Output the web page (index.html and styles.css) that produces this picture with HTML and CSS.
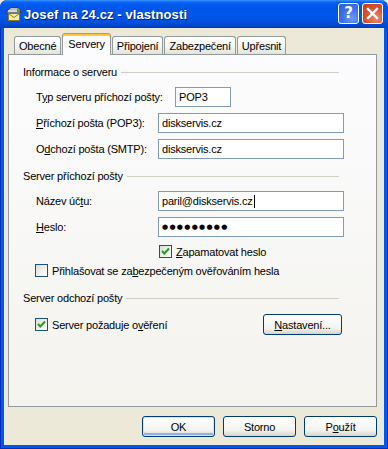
FILE: index.html
```html
<!DOCTYPE html>
<html lang="cs">
<head>
<meta charset="utf-8">
<title>Josef na 24.cz - vlastnosti</title>
<link rel="stylesheet" href="styles.css">
</head>
<body>
<div class="window">
  <div class="titlebar">
    <svg class="app-icon" width="17" height="17" viewBox="0 0 17 17">
      <path d="M2 6 L6 2.5 L13 2.5 L15.5 5 L15.5 8 L2 8 Z" fill="#B8BCC0" stroke="#3A3F44" stroke-width="1"/>
      <path d="M3 6 L14.5 6" stroke="#ECEFF2" stroke-width="1"/>
      <path d="M12 3 L15 5.5 L15 7.5 L12 7.5 Z" fill="#4FA04A"/>
      <rect x="3.5" y="8.5" width="11" height="7" fill="#F6EDA6" stroke="#8C7A2A" stroke-width="1"/>
      <path d="M3.5 8.5 L9 12.5 L14.5 8.5" fill="none" stroke="#8C7A2A" stroke-width="1"/>
    </svg>
    <span class="title">Josef na 24.cz - vlastnosti</span>
    <div class="caption-buttons">
      <span class="cap-btn help">?</span>
      <span class="cap-btn close">
        <svg width="19" height="19" viewBox="0 0 19 19"><path d="M5 5 L14 14 M14 5 L5 14" stroke="#fff" stroke-width="2.4" stroke-linecap="square"/></svg>
      </span>
    </div>
  </div>
  <div class="frame">
    <div class="client">
      <div class="tabs">
        <div class="tab">Obecné</div>
        <div class="tab active">Servery</div>
        <div class="tab">Připojení</div>
        <div class="tab">Zabezpečení</div>
        <div class="tab">Upřesnit</div>
      </div>
      <div class="panel">
        <div class="group-head">Informace o serveru</div>
        <div class="row first">
          <span class="label">T<u>y</u>p serveru příchozí pošty:</span>
          <span class="input short">POP3</span>
        </div>
        <div class="row">
          <span class="label"><u>P</u>říchozí pošta (POP3):</span>
          <span class="input">diskservis.cz</span>
        </div>
        <div class="row">
          <span class="label">O<u>d</u>chozí pošta (SMTP):</span>
          <span class="input">diskservis.cz</span>
        </div>

        <div class="group-head gh2">Server příchozí pošty</div>
        <div class="row first">
          <span class="label">Název úč<u>t</u>u:</span>
          <span class="input">paril@diskservis.cz<span class="caret"></span></span>
        </div>
        <div class="row">
          <span class="label"><u>H</u>eslo:</span>
          <span class="input"><span class="dots">●●●●●●●●●</span></span>
        </div>
        <div class="row check indent rem">
          <span class="cb checked"><svg width="11" height="11" viewBox="0 0 11 11"><path d="M2 5 L4.3 7.5 L9 2.5" fill="none" stroke="#21A121" stroke-width="2"/></svg></span>
          <span><u>Z</u>apamatovat heslo</span>
        </div>
        <div class="row check spa">
          <span class="cb"></span>
          <span>Přihlašovat se za<u>b</u>ezpečeným ověřováním hesla</span>
        </div>

        <div class="group-head gh3">Server odchozí pošty</div>
        <div class="row last">
          <span class="cb checked"><svg width="11" height="11" viewBox="0 0 11 11"><path d="M2 5 L4.3 7.5 L9 2.5" fill="none" stroke="#21A121" stroke-width="2"/></svg></span>
          <span>Server požaduje o<u>v</u>ěření</span>
          <span class="btn settings"><u>N</u>astavení...</span>
        </div>
      </div>
      <div class="buttons">
        <span class="btn default">OK</span>
        <span class="btn">Storno</span>
        <span class="btn">P<u>o</u>užít</span>
      </div>
    </div>
  </div>
</div>
</body>
</html>
```
FILE: styles.css
```css
html, body {
  margin: 0;
  padding: 0;
}
body {
  width: 388px;
  height: 449px;
  overflow: hidden;
  background: #ECE9D8;
  font-family: "Liberation Sans", Arial, sans-serif;
  font-size: 11px;
  letter-spacing: -0.2px;
  color: #000;
  white-space: nowrap;
}
u { text-decoration: underline; text-underline-offset: 1px; }

.window {
  width: 388px;
  height: 449px;
  display: flex;
  flex-direction: column;
  border-radius: 7px 7px 0 0;
  overflow: hidden;
  background: #0054E3;
}

.titlebar {
  height: 28px;
  flex: none;
  display: flex;
  align-items: center;
  padding: 0 5px 0 5px;
  box-sizing: border-box;
  background: linear-gradient(to bottom,
    #3D95FF 0px, #0A66F4 2px, #0058EE 5px, #0055E8 9px,
    #0057EC 14px, #0054E3 20px, #0049D2 25px, #003DB8 28px);
}
.app-icon { flex: none; margin-top: -1px; }
.title {
  margin-left: 2px;
  color: #fff;
  font-weight: bold;
  font-size: 13px;
  text-shadow: 1px 1px 0 #0A1A8C;
  letter-spacing: 0.1px;
}
.caption-buttons {
  margin-left: auto;
  display: flex;
  gap: 3px;
  margin-top: -1px;
}
.cap-btn {
  width: 21px;
  height: 21px;
  box-sizing: border-box;
  border: 1px solid #fff;
  border-radius: 3px;
  display: flex;
  align-items: center;
  justify-content: center;
  color: #fff;
}
.help {
  background: radial-gradient(circle at 70% 75%, #6E9BF8 0%, #3F74EC 45%, #2A5BD8 100%);
  font-family: "DejaVu Sans", sans-serif;
  font-weight: bold;
  font-size: 15px;
  line-height: 1;
  letter-spacing: 0;
}
.close {
  background: radial-gradient(circle at 70% 75%, #F08A6A 0%, #DD5530 45%, #C7391B 100%);
}

.frame {
  flex: 1;
  display: flex;
  padding: 0 4px 4px 4px;
  background: #0058E8;
  box-shadow: inset 1px 0 0 #0030B8, inset -1px 0 0 #0030B8, inset 0 -1px 0 #0030B8;
}
.client {
  flex: 1;
  background: #ECE9D8;
  display: flex;
  flex-direction: column;
  padding: 5px 7px 0 4px;
}

.tabs {
  display: flex;
  align-items: flex-end;
  height: 21px;
  padding-left: 6px;
  gap: 1px;
}
.tab {
  height: 18px;
  box-sizing: border-box;
  border: 1px solid #919B9C;
  border-bottom: none;
  border-radius: 3px 3px 0 0;
  padding: 0 4px;
  background: linear-gradient(#FFFFFF, #F5F5F1 55%, #E3E3DA);
  display: flex;
  align-items: center;
}
.tab.active {
  height: 22px;
  margin-bottom: -1px;
  background: #FCFCFE;
  border-top: 1px solid #E68B2C;
  box-shadow: inset 0 2px 0 #FFC83C;
  position: relative;
  z-index: 1;
  align-items: flex-start;
  padding: 4px 5px 0;
}

.panel {
  height: 353px;
  box-sizing: border-box;
  border: 1px solid #919B9C;
  background: linear-gradient(#FCFCFE, #F4F3EE);
  padding: 11px 32px 0 14px;
}

.group-head {
  display: flex;
  align-items: center;
  height: 13px;
  line-height: 13px;
}
.group-head::after {
  content: "";
  flex: 1;
  height: 1px;
  background: #D0D0BF;
  margin-left: 4px;
  margin-right: 5px;
}
.gh2 { margin-top: 11px; }
.gh3 { margin-top: 14px; }

.row {
  display: flex;
  align-items: center;
  height: 20px;
  margin-top: 6px;
  padding-left: 13px;
}
.row.first { margin-top: 8px; }
.label { width: 122px; flex: none; }
.input {
  flex: 1;
  height: 20px;
  box-sizing: border-box;
  border: 1px solid #7F9DB9;
  background: #fff;
  padding-left: 3px;
  display: flex;
  align-items: center;
}
.input.short {
  flex: none;
  width: 56px;
  margin-left: 17px;
}
.caret {
  width: 1px;
  height: 13px;
  background: #000;
  margin-left: 1px;
}
.dots {
  font-family: "DejaVu Sans", sans-serif;
  font-size: 7px;
  letter-spacing: 1.3px;
}

.row.check { height: 15px; }
.row.rem { margin-top: 7px; padding-left: 136px; }
.row.spa { margin-top: 4px; padding-left: 12px; }
.row.last { height: 21px; margin-top: 9px; padding-left: 12px; }

.cb {
  width: 13px;
  height: 13px;
  box-sizing: border-box;
  border: 1px solid #1C5180;
  background: linear-gradient(135deg, #DCDCD7, #FFFFFF);
  margin-right: 4px;
  flex: none;
  display: flex;
  align-items: center;
  justify-content: center;
}

.btn {
  width: 73px;
  height: 21px;
  box-sizing: border-box;
  border: 1px solid #003C74;
  border-radius: 3px;
  background: linear-gradient(#FFFFFF, #F3F3EF 70%, #D8D3C8);
  display: flex;
  align-items: center;
  justify-content: center;
  flex: none;
}
.btn.default {
  box-shadow: inset 0 0 0 1px #CEE7FF, inset 0 -2px 0 1px #8FB0EC;
}
.settings {
  width: 79px;
  margin-left: auto;
  margin-right: 2px;
}

.buttons {
  display: flex;
  justify-content: flex-end;
  gap: 8px;
  margin-top: 9px;
}
```
